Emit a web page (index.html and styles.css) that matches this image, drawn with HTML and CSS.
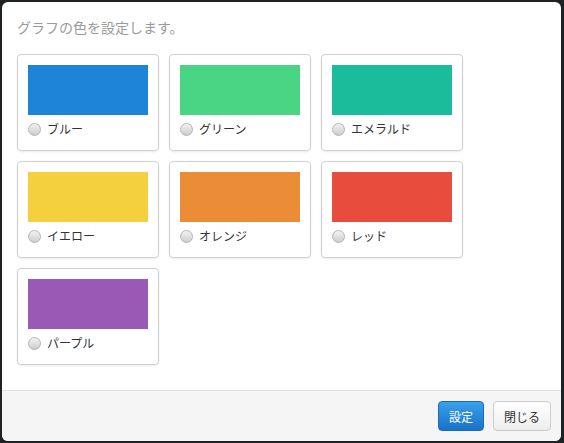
FILE: index.html
```html
<!DOCTYPE html>
<html lang="ja">
<head>
<meta charset="utf-8">
<title>グラフの色</title>
<link rel="stylesheet" href="styles.css">
</head>
<body>
<div class="modal">
  <div class="modal-body">
    <p class="lead">グラフの色を設定します。</p>
    <div class="grid">
      <label class="card"><span class="swatch blue"></span><span class="opt"><span class="radio"></span><span class="name">ブルー</span></span></label>
      <label class="card"><span class="swatch green"></span><span class="opt"><span class="radio"></span><span class="name">グリーン</span></span></label>
      <label class="card"><span class="swatch emerald"></span><span class="opt"><span class="radio"></span><span class="name">エメラルド</span></span></label>
      <label class="card"><span class="swatch yellow"></span><span class="opt"><span class="radio"></span><span class="name">イエロー</span></span></label>
      <label class="card"><span class="swatch orange"></span><span class="opt"><span class="radio"></span><span class="name">オレンジ</span></span></label>
      <label class="card"><span class="swatch red"></span><span class="opt"><span class="radio"></span><span class="name">レッド</span></span></label>
      <label class="card"><span class="swatch purple"></span><span class="opt"><span class="radio"></span><span class="name">パープル</span></span></label>
    </div>
  </div>
  <div class="modal-footer">
    <button class="btn btn-primary">設定</button>
    <button class="btn btn-default">閉じる</button>
  </div>
</div>
</body>
</html>
```
FILE: styles.css
```css
html, body {
  margin: 0;
  padding: 0;
  height: 100%;
}
body {
  background: #1f2224;
  font-family: "Noto Sans CJK JP", "Noto Sans", sans-serif;
  overflow: hidden;
}
.modal {
  position: absolute;
  left: 2px;
  top: 2px;
  width: 559px;
  height: 439px;
  background: #fff;
  border-radius: 6px;
  display: flex;
  flex-direction: column;
  overflow: hidden;
}
.modal-body {
  flex: 1;
  padding: 15px 15px 0 15px;
}
.lead {
  margin: 0 0 17px 0;
  font-size: 14px;
  line-height: 20px;
  color: #9a9a9a;
}
.grid {
  display: grid;
  grid-template-columns: repeat(3, 142px);
  grid-auto-rows: 97px;
  gap: 10px;
}
.card {
  box-sizing: border-box;
  border: 1px solid #cfcfcf;
  border-radius: 4px;
  box-shadow: 0 1px 2px rgba(0,0,0,0.08);
  padding: 10px 10px 10px 10px;
  display: flex;
  flex-direction: column;
}
.swatch {
  display: block;
  width: 120px;
  height: 50px;
}
.blue { background: #1e84d8; }
.green { background: #4ad585; }
.emerald { background: #1bbc9b; }
.yellow { background: #f4d03f; }
.orange { background: #eb8c36; }
.red { background: #e84c3d; }
.purple { background: #9b59b6; }
.opt {
  display: flex;
  align-items: center;
  height: 22px;
  margin-top: 3px;
}
.radio {
  box-sizing: border-box;
  width: 13px;
  height: 13px;
  border-radius: 50%;
  border: 1px solid #b4b4b4;
  background: linear-gradient(#f2f2f2, #cdcdcd);
  flex: none;
}
.name {
  margin-left: 6px;
  font-size: 12px;
  color: #333;
  line-height: 22px;
}
.modal-footer {
  height: 51px;
  box-sizing: border-box;
  border-top: 1px solid #e2e2e2;
  background: #f5f5f5;
  display: flex;
  justify-content: flex-end;
  align-items: flex-start;
  padding: 10px 10px 0 0;
  gap: 9px;
}
.btn {
  height: 30px;
  padding: 0 10px;
  font-family: "Noto Sans CJK JP", sans-serif;
  font-size: 12px;
  border-radius: 4px;
  cursor: pointer;
}
.btn-primary {
  color: #fff;
  background: linear-gradient(#3ba0ea, #1872cb);
  border: 1px solid #1a6ab8;
}
.btn-default {
  color: #333;
  background: linear-gradient(#ffffff, #ededed);
  border: 1px solid #cccccc;
}
```
